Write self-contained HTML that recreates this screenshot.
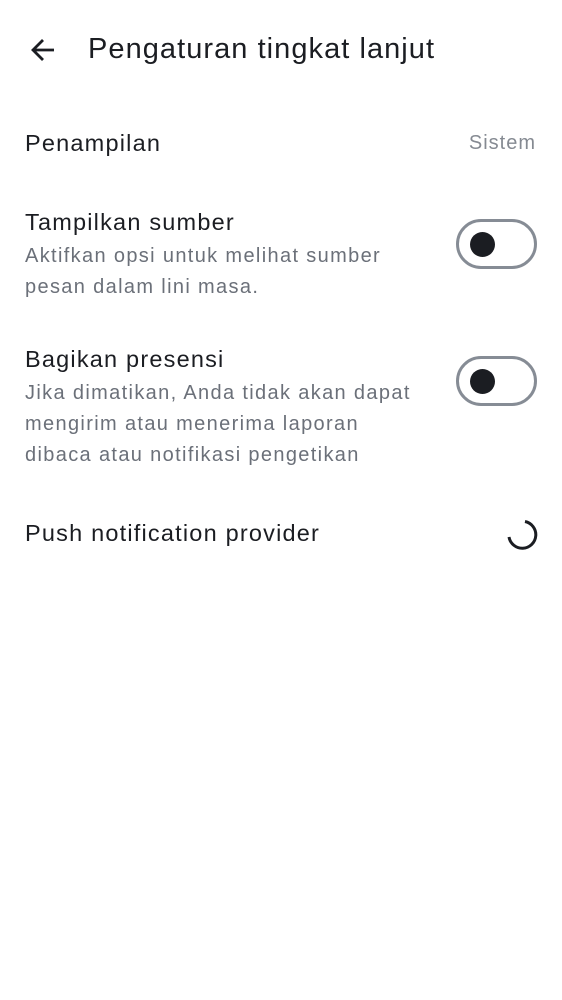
<!DOCTYPE html>
<html><head><meta charset="utf-8"><style>
body{margin:0;width:562px;height:1000px;background:#fff;position:relative;overflow:hidden;font-family:"Liberation Sans",sans-serif;color:#1b1d22}
.a{position:absolute;white-space:nowrap}
.t{font-size:23.5px;letter-spacing:1.2px}
.s{font-size:20px;color:#6b7079;line-height:31px;letter-spacing:1.35px}
.tg{position:absolute;left:456px;border:3px solid #868c95;border-radius:26px;width:75px;height:44px}
.tg:after{content:"";position:absolute;left:11px;top:10px;width:25px;height:25px;border-radius:50%;background:#1b1d22}
</style></head><body>
<svg class="a" style="left:28px;top:35px" width="30" height="30" viewBox="0 0 30 30"><path d="M26 15H5M15 5L5 15l10 10" fill="none" stroke="#1b1d22" stroke-width="2.8"/></svg>
<div class="a" style="left:88px;top:33px;font-size:29px;letter-spacing:1.05px">Pengaturan tingkat lanjut</div>
<div class="a t" style="left:25px;top:130px">Penampilan</div>
<div class="a" style="right:26px;top:132px;font-size:20px;color:#858a92;letter-spacing:1px">Sistem</div>
<div class="a t" style="left:25px;top:209px">Tampilkan sumber</div>
<div class="a s" style="left:25px;top:241px">Aktifkan opsi untuk melihat sumber<br>pesan dalam lini masa.</div>
<div class="tg" style="top:219px"></div>
<div class="a t" style="left:25px;top:346px">Bagikan presensi</div>
<div class="a s" style="left:25px;top:378px">Jika dimatikan, Anda tidak akan dapat<br>mengirim atau menerima laporan<br>dibaca atau notifikasi pengetikan</div>
<div class="tg" style="top:356px"></div>
<div class="a t" style="left:25px;top:520px">Push notification provider</div>
<svg class="a" style="left:504px;top:517px" width="36" height="36" viewBox="0 0 36 36"><path d="M21 4.5A13.5 13.5 0 1 1 5 20" fill="none" stroke="#1b1d22" stroke-width="3"/></svg>
</body></html>
